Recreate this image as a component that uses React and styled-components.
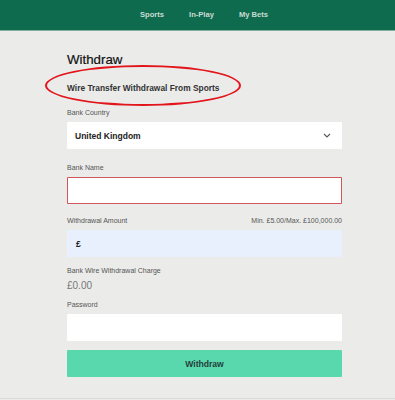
import React from "react";
import styled, { createGlobalStyle } from "styled-components";

const Global = createGlobalStyle`
  html, body { margin: 0; padding: 0; background: #ebecea; }
  body { font-family: "Liberation Sans", Arial, sans-serif; color: #222; }
  * { box-sizing: border-box; }
`;

const Header = styled.header`
  height: 31px;
  background: #0e6b4e;
  border-bottom: 1px solid #86ae9f;
  display: flex;
  align-items: center;
  justify-content: center;
  padding-left: 13px;
  gap: 25px;
`;

const NavItem = styled.a`
  font-size: 7.6px;
  font-weight: 700;
  color: #c9dbd3;
  text-decoration: none;
  line-height: 10px;
`;

const Main = styled.main`
  height: 368px;
  border-bottom: 1px solid #d9dad8;
  padding: 21px 0 0 67px;
`;

const Form = styled.div`
  width: 275px;
  display: flex;
  flex-direction: column;
`;

const Title = styled.h1`
  margin: 0;
  font-size: 13.3px;
  font-weight: 400;
  line-height: 16px;
  color: #111;
  -webkit-text-stroke: 0.2px #111;
`;

const SubtitleWrap = styled.div`
  position: relative;
  margin-top: 14px;
`;

const Subtitle = styled.h2`
  margin: 0;
  font-size: 8.4px;
  font-weight: 700;
  line-height: 12px;
  color: #333;
`;

const Ellipse = styled.div`
  position: absolute;
  left: -22px;
  top: -17px;
  width: 196px;
  height: 41px;
  border: 2px solid #e3151c;
  border-radius: 50%;
  pointer-events: none;
`;

const LabelRow = styled.div`
  display: flex;
  justify-content: space-between;
  margin-top: ${(p) => p.$mt}px;
  font-size: 7px;
  line-height: 10px;
  color: #555;
`;

const Box = styled.div`
  margin-top: 4px;
  height: 27px;
  background: ${(p) => p.$bg || "#ffffff"};
  box-shadow: ${(p) => (p.$error ? "inset 0 0 0 1px #d0565c" : "none")};
  border-radius: 1px;
  display: flex;
  align-items: center;
  justify-content: space-between;
  padding: 0 11px 0 ${(p) => p.$pl || 13}px;
  font-size: 8.5px;
  font-weight: 700;
  color: #222;
`;

const Value = styled.div`
  margin-top: 3px;
  font-size: 10px;
  line-height: 14px;
  color: #777;
`;

const Button = styled.button`
  margin-top: 9px;
  height: 27px;
  width: 100%;
  border: none;
  border-radius: 1px;
  background: #59d8ae;
  font-family: inherit;
  font-size: 8.6px;
  font-weight: 700;
  color: #24403a;
  padding: 0;
`;

const Chevron = () => (
  <svg width="8" height="5" viewBox="0 0 8 5">
    <polyline points="1,1 4,4 7,1" fill="none" stroke="#555" strokeWidth="1.1" />
  </svg>
);

export default function App() {
  return (
    <>
      <Global />
      <Header>
        <NavItem>Sports</NavItem>
        <NavItem>In-Play</NavItem>
        <NavItem>My Bets</NavItem>
      </Header>
      <Main>
        <Form>
          <Title>Withdraw</Title>
          <SubtitleWrap>
            <Subtitle>Wire Transfer Withdrawal From Sports</Subtitle>
            <Ellipse />
          </SubtitleWrap>
          <LabelRow $mt={14}>
            <span>Bank Country</span>
          </LabelRow>
          <Box $pl={8}>
            <span>United Kingdom</span>
            <Chevron />
          </Box>
          <LabelRow $mt={14}>
            <span>Bank Name</span>
          </LabelRow>
          <Box $error />
          <LabelRow $mt={12}>
            <span>Withdrawal Amount</span>
            <span>Min. £5.00/Max. £100,000.00</span>
          </LabelRow>
          <Box $bg="#e7f0fc" $pl={9}>
            <span>£</span>
          </Box>
          <LabelRow $mt={9}>
            <span>Bank Wire Withdrawal Charge</span>
          </LabelRow>
          <Value>£0.00</Value>
          <LabelRow $mt={7}>
            <span>Password</span>
          </LabelRow>
          <Box />
          <Button>Withdraw</Button>
        </Form>
      </Main>
    </>
  );
}
